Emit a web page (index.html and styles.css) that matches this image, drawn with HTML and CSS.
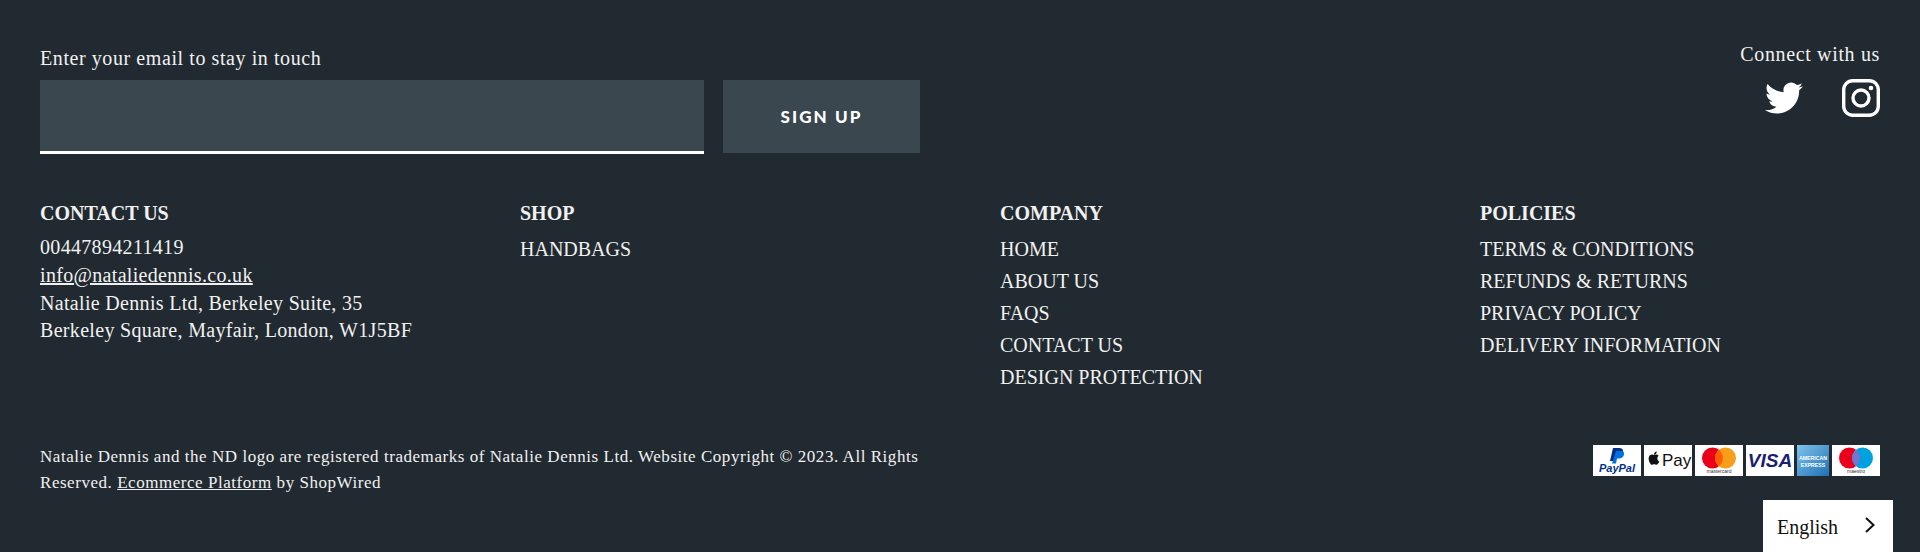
FILE: index.html
```html
<!DOCTYPE html>
<html lang="en">
<head>
    <meta charset="UTF-8">
    <meta name="viewport" content="width=device-width, initial-scale=1.0">
    <title>Natalie Dennis Footer</title>
    <link rel="stylesheet" href="styles.css">
</head>
<body>
    <footer class="site-footer">
        <div class="footer-top">
            <form class="signup">
                <label class="signup-label" for="email">Enter your email to stay in touch</label>
                <div class="signup-row">
                    <input class="signup-input" type="email" id="email">
                    <button class="signup-btn" type="button">SIGN UP</button>
                </div>
            </form>
            <div class="social">
                <p class="social-label">Connect with us</p>
                <div class="social-icons">
                    <svg class="icon-twitter" viewBox="0 0 24 24" fill="#fff"><path d="M23.95 4.57a10 10 0 0 1-2.82.77 4.96 4.96 0 0 0 2.16-2.72c-.95.55-2 .96-3.12 1.19a4.92 4.92 0 0 0-8.38 4.48C7.69 8.1 4.07 6.13 1.64 3.16a4.82 4.82 0 0 0-.67 2.48c0 1.71.87 3.21 2.19 4.1a4.9 4.9 0 0 1-2.23-.62v.06a4.92 4.92 0 0 0 3.95 4.83 5 5 0 0 1-2.21.08 4.94 4.94 0 0 0 4.6 3.42A9.87 9.87 0 0 1 0 19.54a14 14 0 0 0 7.56 2.21c9.05 0 14-7.5 14-13.98 0-.21 0-.42-.02-.63a9.94 9.94 0 0 0 2.41-2.57z"/></svg>
                    <svg class="icon-instagram" viewBox="0 0 38 38" fill="none" stroke="#fff" stroke-width="3.4"><rect x="1.7" y="1.7" width="34.6" height="34.6" rx="9"/><circle cx="19" cy="19" r="8"/><circle cx="29" cy="9" r="2.3" fill="#fff" stroke="none"/></svg>
                </div>
            </div>
        </div>

        <div class="footer-cols">
            <div class="footer-col">
                <h3 class="col-title">CONTACT US</h3>
                <div class="contact-lines">
                    <p>00447894211419</p>
                    <p><a href="#">info@nataliedennis.co.uk</a></p>
                    <p>Natalie Dennis Ltd, Berkeley Suite, 35</p>
                    <p>Berkeley Square, Mayfair, London, W1J5BF</p>
                </div>
            </div>
            <div class="footer-col">
                <h3 class="col-title">SHOP</h3>
                <ul class="col-links">
                    <li>HANDBAGS</li>
                </ul>
            </div>
            <div class="footer-col">
                <h3 class="col-title">COMPANY</h3>
                <ul class="col-links">
                    <li>HOME</li>
                    <li>ABOUT US</li>
                    <li>FAQS</li>
                    <li>CONTACT US</li>
                    <li>DESIGN PROTECTION</li>
                </ul>
            </div>
            <div class="footer-col">
                <h3 class="col-title">POLICIES</h3>
                <ul class="col-links">
                    <li>TERMS &amp; CONDITIONS</li>
                    <li>REFUNDS &amp; RETURNS</li>
                    <li>PRIVACY POLICY</li>
                    <li>DELIVERY INFORMATION</li>
                </ul>
            </div>
        </div>

        <div class="footer-bottom">
            <p class="legal">Natalie Dennis and the ND logo are registered trademarks of Natalie Dennis Ltd. Website Copyright © 2023. All Rights Reserved. <a href="#">Ecommerce Platform</a> by ShopWired</p>
            <div class="payments">
                <svg class="pay-card" viewBox="0 0 48 31">
                    <path d="M20 3h6c3 0 4.500 1.500 4 4-.6 3-3 4.500-6 4.500h-2L21 16h-4z" fill="#003087"/>
                    <path d="M23 6h5c2.500 0 3.500 1.500 3 3.500-.6 2.500-2.500 4-5 4h-2l-1 5h-4z" fill="#0070e0"/>
                    <text class="paypal-text" x="24" y="27" text-anchor="middle">PayPal</text>
                </svg>
                <svg class="pay-card" viewBox="0 0 48 31">
                    <path d="M14.700 10.800c-.6-.8-1.500-1.200-2.300-1.200-1 0-1.500.5-2.200.5s-1.300-.5-2.200-.5c-1.100 0-2.300.7-2.900 1.800-1 1.700-.3 4.800.8 6.500.5.800 1.200 1.800 2.100 1.800.8 0 1.100-.5 2.200-.5s1.300.5 2.200.5 1.500-.9 2.100-1.700c.3-.5.5-.9.800-1.600-2.300-.9-2.600-4.600-.6-5.600z" fill="#111"/>
                    <path d="M12 8.700c.5-.6.800-1.400.7-2.200-.7 0-1.500.5-2 1.100-.4.500-.8 1.300-.7 2.100.8 0 1.500-.4 2-1z" fill="#111"/>
                    <text class="applepay-text" x="18" y="21">Pay</text>
                </svg>
                <svg class="pay-card" viewBox="0 0 48 31">
                    <circle cx="17.500" cy="13" r="10.500" fill="#eb001b"/>
                    <circle cx="30.500" cy="13" r="10.500" fill="#f79e1b"/>
                    <path d="M24 4.800a10.500 10.500 0 0 1 0 16.400 10.500 10.500 0 0 1 0-16.400z" fill="#ff5f00"/>
                    <text class="card-small" x="24" y="28" text-anchor="middle">mastercard</text>
                </svg>
                <svg class="pay-card" viewBox="0 0 48 31">
                    <text class="visa-text" x="24" y="22" text-anchor="middle">VISA</text>
                </svg>
                <svg class="pay-amex" viewBox="0 0 32 31">
                    <defs>
                        <linearGradient id="amex-grad" x1="0" y1="0" x2="1" y2="1">
                            <stop offset="0" stop-color="#7fc4ec"/>
                            <stop offset="1" stop-color="#1f70b4"/>
                        </linearGradient>
                    </defs>
                    <rect width="32" height="31" fill="url(#amex-grad)"/>
                    <text class="amex-text" x="16" y="15" text-anchor="middle">AMERICAN</text>
                    <text class="amex-text" x="16" y="22" text-anchor="middle">EXPRESS</text>
                </svg>
                <svg class="pay-card" viewBox="0 0 48 31">
                    <circle cx="17.500" cy="13" r="10.500" fill="#eb001b"/>
                    <circle cx="30.500" cy="13" r="10.500" fill="#00a1df"/>
                    <path d="M24 4.800a10.500 10.500 0 0 1 0 16.400 10.500 10.500 0 0 1 0-16.400z" fill="#7375cf"/>
                    <text class="card-small" x="24" y="28" text-anchor="middle">maestro</text>
                </svg>
            </div>
        </div>
    </footer>

    <div class="lang-switch">
        <span>English</span>
        <svg class="lang-arrow" viewBox="0 0 12 18" fill="none" stroke="#111" stroke-width="2"><path d="M2 2l7.500 7L2 16"/></svg>
    </div>
</body>
</html>
```

FILE: styles.css
```css
* {
    margin: 0;
    padding: 0;
    box-sizing: border-box;
}

body {
    font-family: 'Liberation Serif', serif;
    background: #212a30;
    color: #f1f1f1;
    height: 552px;
    overflow: hidden;
    position: relative;
}

.site-footer {
    padding: 41px 40px 0;
}

.footer-top {
    display: flex;
    justify-content: space-between;
    align-items: flex-start;
}

.signup {
    padding-top: 4px;
}

.signup-label {
    display: block;
    font-size: 20px;
    line-height: 26px;
    letter-spacing: 0.58px;
    margin-bottom: 9px;
}

.signup-row {
    display: flex;
    gap: 19px;
}

.signup-input {
    width: 664px;
    height: 74px;
    background: #3a474e;
    border: none;
    border-bottom: 3px solid #fff;
    outline: none;
}

.signup-btn {
    width: 197px;
    height: 73px;
    background: #3a474e;
    border: none;
    color: #fff;
    font-family: 'Lato', sans-serif;
    font-weight: 900;
    font-size: 17px;
    letter-spacing: 2.1px;
}

.social {
    display: flex;
    flex-direction: column;
    align-items: flex-end;
}

.social-label {
    font-size: 20px;
    line-height: 26px;
    letter-spacing: 0.65px;
    margin-bottom: 12px;
}

.social-icons {
    display: flex;
    align-items: center;
    gap: 39px;
}

.icon-twitter {
    width: 38px;
    height: 38px;
}

.icon-instagram {
    width: 38px;
    height: 38px;
}

.footer-cols {
    display: grid;
    grid-template-columns: repeat(4, 480px);
    margin-top: 46px;
    height: 244px;
}

.col-title {
    font-size: 20px;
    font-weight: 700;
    line-height: 26px;
    margin-bottom: 7px;
}

.col-links {
    list-style: none;
}

.col-links li {
    font-size: 20px;
    line-height: 32px;
}

.contact-lines {
    padding-top: 1px;
}

.contact-lines p {
    font-size: 20px;
    line-height: 27.8px;
    letter-spacing: 0.32px;
}

.contact-lines a,
.legal a {
    color: inherit;
}

.footer-bottom {
    display: flex;
    justify-content: space-between;
    align-items: flex-start;
}

.legal {
    width: 900px;
    font-size: 17px;
    line-height: 26px;
    letter-spacing: 0.54px;
}

.payments {
    display: flex;
    gap: 3px;
    margin-top: 1px;
}

.pay-card {
    width: 48px;
    height: 31px;
    background: #fff;
}

.pay-amex {
    width: 32px;
    height: 31px;
}

.paypal-text {
    font-family: 'Liberation Sans', sans-serif;
    font-size: 11px;
    font-weight: 700;
    font-style: italic;
    fill: #003087;
}

.applepay-text {
    font-family: 'Liberation Sans', sans-serif;
    font-size: 17px;
    fill: #111;
}

.card-small {
    font-family: 'Liberation Sans', sans-serif;
    font-size: 5px;
    fill: #333;
}

.visa-text {
    font-family: 'Liberation Sans', sans-serif;
    font-size: 19px;
    font-weight: 700;
    font-style: italic;
    fill: #1a1f71;
}

.amex-text {
    font-family: 'Liberation Sans', sans-serif;
    font-size: 5.2px;
    font-weight: 700;
    fill: #fff;
}

/* language picker sits over the page corner */
.lang-switch {
    position: absolute;
    right: 27px;
    bottom: 0;
    width: 130px;
    height: 52px;
    background: #fff;
    color: #111;
    font-size: 20px;
    display: flex;
    align-items: center;
    justify-content: space-between;
    padding: 2px 17px 0 14px;
}

.lang-arrow {
    width: 12px;
    height: 18px;
    margin-top: -4px;
}
```
